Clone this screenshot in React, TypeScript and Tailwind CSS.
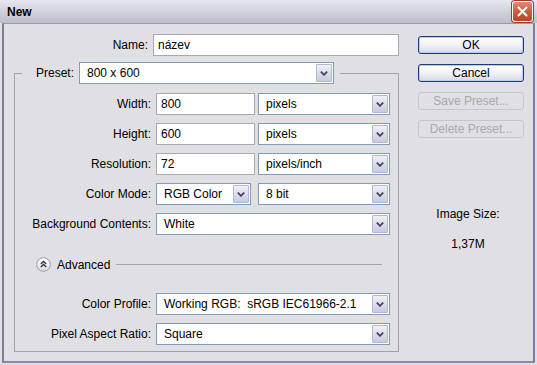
import React from 'react';

const Chevron = () => (
  <span className="flex h-full w-[16px] items-center justify-center rounded-[1px] border border-[#b1b8d4] bg-gradient-to-b from-[#f0f0f8] to-[#c8cbe0]">
    <svg width="8" height="5" viewBox="0 0 8 5">
      <path d="M0.8 0.6 L4 3.8 L7.2 0.6" fill="none" stroke="#444460" strokeWidth="1.8" />
    </svg>
  </span>
);

function Combo({ value, width }: { value: string; width: string }) {
  return (
    <div className={`flex h-[22px] items-center border border-[#7f9db9] bg-white p-[1px] ${width}`}>
      <span className="flex-1 whitespace-pre pl-[6px]">{value}</span>
      <Chevron />
    </div>
  );
}

function Field({ value, width }: { value: string; width: string }) {
  return (
    <div className={`flex h-[22px] items-center border border-[#a7abb0] bg-white pl-[4px] ${width}`}>
      {value}
    </div>
  );
}

function Row({ label, children }: { label: string; children: React.ReactNode }) {
  return (
    <div className="flex items-center">
      <span className="w-[136px] text-right">{label}</span>
      <div className="ml-[5px] flex items-center">{children}</div>
    </div>
  );
}

function Button({ label, disabled }: { label: string; disabled?: boolean }) {
  if (disabled) {
    return (
      <div className="flex h-[18px] w-[106px] items-center justify-center rounded-[3px] border border-[#c6c6cc] text-[#a9a8ae]">
        {label}
      </div>
    );
  }
  return (
    <div className="flex h-[18px] w-[106px] items-center justify-center rounded-[3px] border border-[#1f3b78] bg-gradient-to-b from-[#ffffff] via-[#f2f2f6] to-[#d6d8e6] shadow-[inset_0_0_0_1px_#b9cbf0]">
      {label}
    </div>
  );
}

export default function App() {
  return (
    <div className="flex h-[365px] w-[537px] flex-col bg-[#e0dfe3] font-['Liberation_Sans',Arial,sans-serif] text-[12px] text-black">
      {/* title bar */}
      <div className="flex h-[23px] items-center justify-between bg-gradient-to-b from-[#e6e6ee] via-[#d2d2de] to-[#bdbdcc] pl-[7px] pr-[4px]">
        <span className="font-bold">New</span>
        <div className="flex h-[21px] w-[21px] items-center justify-center rounded-[3px] border border-white bg-gradient-to-b from-[#e48a72] via-[#cc5a40] to-[#b8432c] shadow-[0_0_0_1px_#9a3a2a]">
          <svg width="11" height="11" viewBox="0 0 11 11">
            <path d="M1.5 1.5 L9.5 9.5 M9.5 1.5 L1.5 9.5" stroke="white" strokeWidth="2" strokeLinecap="round" />
          </svg>
        </div>
      </div>

      <div className="flex flex-1 flex-col px-[2px] pb-[2px]">
        <div className="flex flex-1 border-x-2 border-b-2 border-t border-x-[#7c7c9c] border-b-[#8a8aa8] border-t-[#9a9ab4]">
          {/* left column */}
          <div className="flex w-[395px] flex-col">
            <div className="mt-[10px] flex items-center">
              <span className="w-[147px] text-right">Name:</span>
              <div className="ml-[5px]">
                <Field value="název" width="w-[246px]" />
              </div>
            </div>

            <fieldset className="ml-[10px] mt-[6px] w-[385px] border border-[#a2a2aa] pb-[6px]">
              <legend className="ml-[7px] flex items-center pl-[14px] pr-[6px]">
                <span>Preset:</span>
                <div className="ml-[5px]">
                  <Combo value="800 x 600" width="w-[255px]" />
                </div>
              </legend>

              <div className="mt-[9px] flex flex-col gap-[8px]">
                <Row label="Width:">
                  <Field value="800" width="w-[99px]" />
                  <div className="ml-[3px]">
                    <Combo value="pixels" width="w-[132px]" />
                  </div>
                </Row>
                <Row label="Height:">
                  <Field value="600" width="w-[99px]" />
                  <div className="ml-[3px]">
                    <Combo value="pixels" width="w-[132px]" />
                  </div>
                </Row>
                <Row label="Resolution:">
                  <Field value="72" width="w-[99px]" />
                  <div className="ml-[3px]">
                    <Combo value="pixels/inch" width="w-[132px]" />
                  </div>
                </Row>
                <Row label="Color Mode:">
                  <Combo value="RGB Color" width="w-[95px]" />
                  <div className="ml-[7px]">
                    <Combo value="8 bit" width="w-[132px]" />
                  </div>
                </Row>
                <Row label="Background Contents:">
                  <Combo value="White" width="w-[234px]" />
                </Row>
              </div>

              <div className="ml-[21px] mr-[16px] mt-[22px] flex h-[15px] items-center">
                <svg width="15" height="15" viewBox="0 0 15 15">
                  <defs>
                    <linearGradient id="adv" x1="0" y1="0" x2="0" y2="1">
                      <stop offset="0" stopColor="#ffffff" />
                      <stop offset="1" stopColor="#dcdce4" />
                    </linearGradient>
                  </defs>
                  <circle cx="7.5" cy="7.5" r="6.8" fill="url(#adv)" stroke="#9a9aa8" strokeWidth="1" />
                  <path d="M4.8 7 L7.5 4.5 L10.2 7 M4.8 10 L7.5 7.5 L10.2 10" fill="none" stroke="#333" strokeWidth="1.3" />
                </svg>
                <span className="ml-[6px]">Advanced</span>
                <div className="ml-[6px] h-px flex-1 bg-[#a4a4ac]" />
              </div>

              <div className="mt-[21px] flex flex-col gap-[8px]">
                <Row label="Color Profile:">
                  <Combo value="Working RGB:  sRGB IEC61966-2.1" width="w-[234px]" />
                </Row>
                <Row label="Pixel Aspect Ratio:">
                  <Combo value="Square" width="w-[234px]" />
                </Row>
              </div>
            </fieldset>
          </div>

          {/* right column */}
          <div className="ml-[19px] mt-[12px] flex flex-col">
            <div className="flex flex-col gap-[10px]">
              <Button label="OK" />
              <Button label="Cancel" />
              <Button label="Save Preset..." disabled />
              <Button label="Delete Preset..." disabled />
            </div>
            <div className="mt-[67px] w-[100px] text-center">Image Size:</div>
            <div className="mt-[12px] w-[100px] text-center">1,37M</div>
          </div>
        </div>
      </div>
    </div>
  );
}
